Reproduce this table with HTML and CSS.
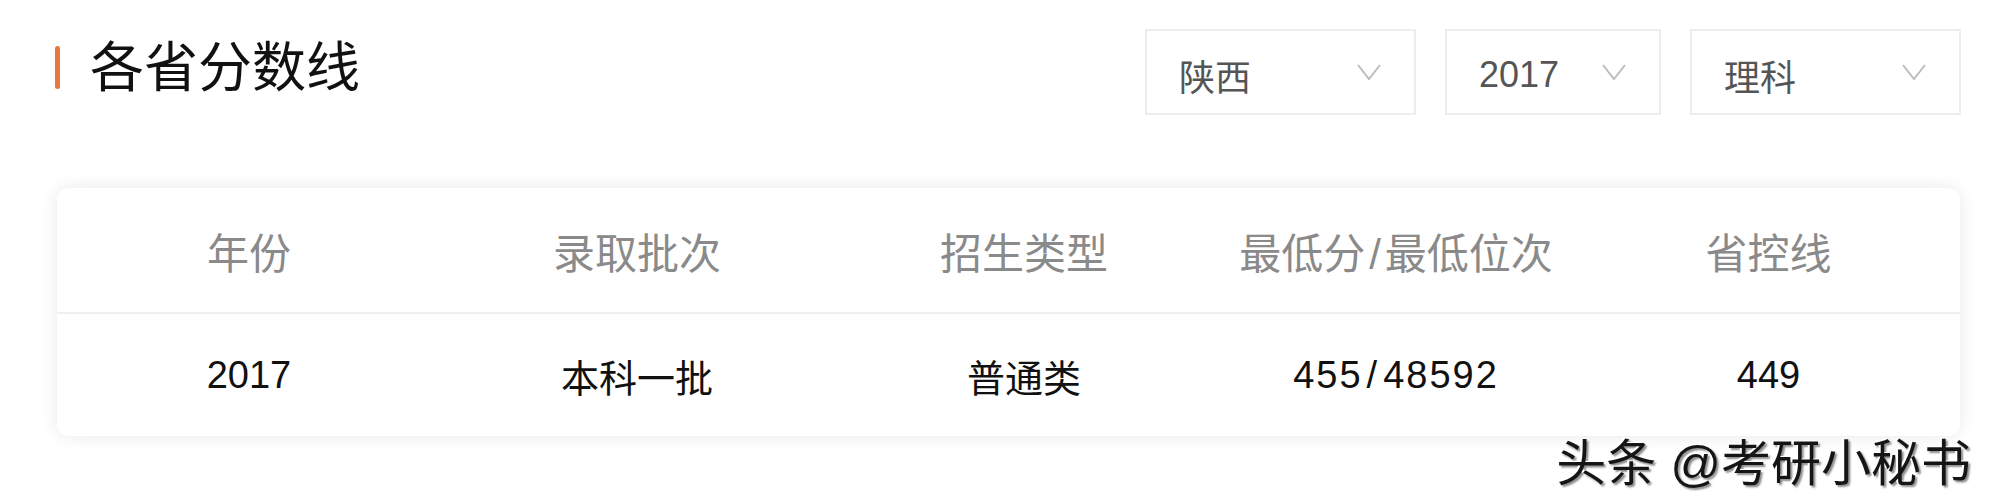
FILE: index.html
```html
<!DOCTYPE html>
<html lang="zh-CN">
<head>
  <meta charset="UTF-8" />
  <meta name="viewport" content="width=device-width, initial-scale=1.0" />
  <title>各省分数线</title>
  <link rel="stylesheet" href="styles.css">
</head>
<body>
  <div class="page">
    <div class="top">
      <h1 class="title"><span class="mark"></span>各省分数线</h1>
      <div class="filters">
        <div class="select w-prov">
          <span>陕西</span>
          <svg class="arrow" width="24" height="16" viewBox="0 0 24 16"><path d="M1 1 L12 15 L23 1" fill="none" stroke="#bdbdbd" stroke-width="2"/></svg>
        </div>
        <div class="select w-year">
          <span>2017</span>
          <svg class="arrow" width="24" height="16" viewBox="0 0 24 16"><path d="M1 1 L12 15 L23 1" fill="none" stroke="#bdbdbd" stroke-width="2"/></svg>
        </div>
        <div class="select w-type">
          <span>理科</span>
          <svg class="arrow" width="24" height="16" viewBox="0 0 24 16"><path d="M1 1 L12 15 L23 1" fill="none" stroke="#bdbdbd" stroke-width="2"/></svg>
        </div>
      </div>
    </div>

    <div class="card">
      <div class="row head-row">
        <div>年份</div>
        <div>录取批次</div>
        <div>招生类型</div>
        <div>最低分<span class="sep">/</span>最低位次</div>
        <div>省控线</div>
      </div>
      <div class="row body-row">
        <div>2017</div>
        <div>本科一批</div>
        <div>普通类</div>
        <div class="num">455<span class="sep">/</span>48592</div>
        <div>449</div>
      </div>
    </div>

    <div class="watermark">头条 @考研小秘书</div>
  </div>
</body>
</html>
```

FILE: styles.css
```css
body {
  margin: 0;
  background: #fff;
  font-family: "Liberation Sans", "Noto Sans CJK SC", sans-serif;
  color: #111;
}
.page {
  position: relative;
  height: 500px;
  overflow: hidden;
}
.top {
  display: flex;
  justify-content: space-between;
  align-items: center;
  padding: 29px 32px 0 55px;
}
.title {
  display: flex;
  align-items: center;
  margin: 0 0 9px;
  font-size: 54px;
  font-weight: 400;
  line-height: 1;
  color: #111;
}
.mark {
  width: 5px;
  height: 43px;
  border-radius: 3px;
  background: #e8793a;
  margin-right: 30px;
}
.filters {
  display: flex;
  gap: 29px;
}
.select {
  box-sizing: border-box;
  height: 86px;
  border: 2px solid #ededed;
  display: flex;
  align-items: center;
  justify-content: space-between;
  padding: 0 33px 0 32px;
  font-size: 36px;
  color: #555;
}
.select span {
  margin-top: 6px;
}
.w-prov { width: 271px; }
.w-year { width: 216px; }
.w-type { width: 271px; }
.arrow {
  display: block;
}
.card {
  margin: 73px 33px 0 57px;
  background: #fff;
  border-radius: 12px;
  box-shadow: 0 0 18px rgba(0, 0, 0, 0.09);
}
.row {
  display: grid;
  grid-template-columns: 384fr 392fr 382fr 362fr 383fr;
  align-items: center;
  text-align: center;
}
.head-row {
  height: 124px;
  border-bottom: 2px solid #efefef;
  font-size: 42px;
  color: #8a8a8a;
}
.body-row {
  height: 122px;
  font-size: 38px;
  color: #111;
}
.sep {
  margin: 0 4px;
}
.num {
  letter-spacing: 2px;
}
.watermark {
  position: absolute;
  right: 22px;
  top: 439px;
  font-size: 50px;
  line-height: 1;
  color: #151515;
  text-shadow: -2px -1px 0 #fff, 2px 2px 2px rgba(0, 0, 0, 0.45);
}
```
